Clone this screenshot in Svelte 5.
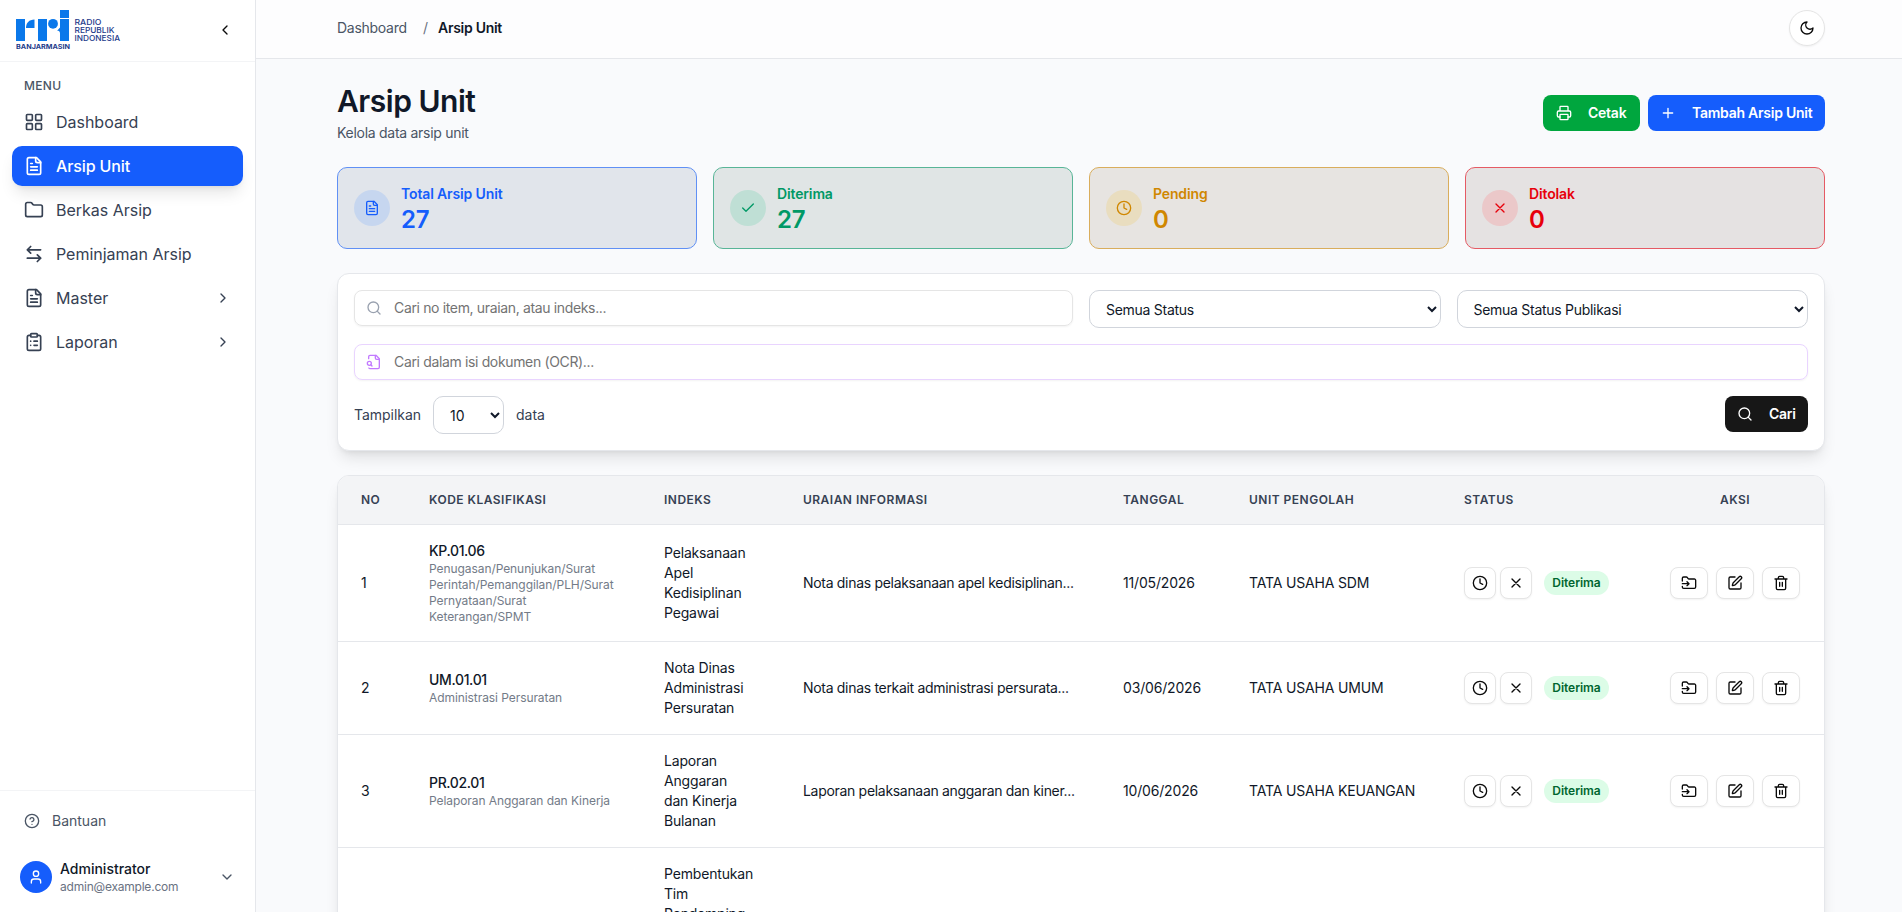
<script lang="ts">
	interface Row {
		no?: number;
		kode?: string;
		klasifikasi?: string;
		indeks: string;
		uraian?: string;
		tanggal?: string;
		unit?: string;
	}

	const icons: Record<string, string> = {
		grid: '<rect width="7" height="7" x="3" y="3" rx="1"/><rect width="7" height="7" x="14" y="3" rx="1"/><rect width="7" height="7" x="14" y="14" rx="1"/><rect width="7" height="7" x="3" y="14" rx="1"/>',
		file: '<path d="M15 2H6a2 2 0 0 0-2 2v16a2 2 0 0 0 2 2h12a2 2 0 0 0 2-2V7Z"/><path d="M14 2v4a2 2 0 0 0 2 2h4M10 9H8M16 13H8M16 17H8"/>',
		folder: '<path d="M20 20a2 2 0 0 0 2-2V8a2 2 0 0 0-2-2h-7.9a2 2 0 0 1-1.69-.9L9.6 3.9A2 2 0 0 0 7.93 3H4a2 2 0 0 0-2 2v13a2 2 0 0 0 2 2Z"/>',
		swap: '<path d="M8 3 4 7l4 4M4 7h16M16 21l4-4-4-4M20 17H4"/>',
		clipboard: '<rect width="8" height="4" x="8" y="2" rx="1"/><path d="M16 4h2a2 2 0 0 1 2 2v14a2 2 0 0 1-2 2H6a2 2 0 0 1-2-2V6a2 2 0 0 1 2-2h2M12 11h4M12 16h4M8 11h.01M8 16h.01"/>',
		left: '<path d="m15 18-6-6 6-6"/>',
		right: '<path d="m9 18 6-6-6-6"/>',
		down: '<path d="m6 9 6 6 6-6"/>',
		help: '<circle cx="12" cy="12" r="10"/><path d="M9.09 9a3 3 0 0 1 5.83 1c0 2-3 3-3 3M12 17h.01"/>',
		user: '<path d="M19 21v-2a4 4 0 0 0-4-4H9a4 4 0 0 0-4 4v2"/><circle cx="12" cy="7" r="4"/>',
		moon: '<path d="M12 3a6 6 0 0 0 9 9 9 9 0 1 1-9-9Z"/>',
		printer: '<path d="M6 18H4a2 2 0 0 1-2-2v-5a2 2 0 0 1 2-2h16a2 2 0 0 1 2 2v5a2 2 0 0 1-2 2h-2M6 9V3a1 1 0 0 1 1-1h10a1 1 0 0 1 1 1v6"/><rect x="6" y="14" width="12" height="8" rx="1"/>',
		plus: '<path d="M5 12h14M12 5v14"/>',
		check: '<path d="M20 6 9 17l-5-5"/>',
		clock: '<circle cx="12" cy="12" r="10"/><path d="M12 6v6l4 2"/>',
		x: '<path d="M18 6 6 18M6 6l12 12"/>',
		search: '<circle cx="11" cy="11" r="8"/><path d="m21 21-4.3-4.3"/>',
		fileSearch: '<path d="M14 2v4a2 2 0 0 0 2 2h4"/><path d="M4.268 21a2 2 0 0 0 1.727 1H18a2 2 0 0 0 2-2V7l-5-5H6a2 2 0 0 0-2 2v3"/><path d="m9 18-1.5-1.5"/><circle cx="5" cy="14" r="3"/>',
		folderInput: '<path d="M2 9V5a2 2 0 0 1 2-2h3.9a2 2 0 0 1 1.69.9l.81 1.2a2 2 0 0 0 1.67.9H20a2 2 0 0 1 2 2v10a2 2 0 0 1-2 2H4a2 2 0 0 1-2-2v-1M2 13h10M9 16l3-3-3-3"/>',
		pen: '<path d="M12 3H5a2 2 0 0 0-2 2v14a2 2 0 0 0 2 2h14a2 2 0 0 0 2-2v-7"/><path d="M18.375 2.625a1 1 0 0 1 3 3l-9.013 9.014a2 2 0 0 1-.853.505l-2.873.84a.5.5 0 0 1-.62-.62l.84-2.873a2 2 0 0 1 .506-.852z"/>',
		trash: '<path d="M3 6h18M19 6v14c0 1-1 2-2 2H7c-1 0-2-1-2-2V6M8 6V4c0-1 1-2 2-2h4c1 0 2 1 2 2v2M10 11v6M14 11v6"/>'
	};

	const menu = [
		{ label: 'Dashboard', icon: 'grid' },
		{ label: 'Arsip Unit', icon: 'file', active: true },
		{ label: 'Berkas Arsip', icon: 'folder' },
		{ label: 'Peminjaman Arsip', icon: 'swap' },
		{ label: 'Master', icon: 'file', children: true },
		{ label: 'Laporan', icon: 'clipboard', children: true }
	];

	const stats = [
		{ label: 'Total Arsip Unit', value: 27, icon: 'file', tone: 'blue' },
		{ label: 'Diterima', value: 27, icon: 'check', tone: 'green' },
		{ label: 'Pending', value: 0, icon: 'clock', tone: 'amber' },
		{ label: 'Ditolak', value: 0, icon: 'x', tone: 'red' }
	];

	const rows: Row[] = [
		{
			no: 1,
			kode: 'KP.01.06',
			klasifikasi: 'Penugasan/Penunjukan/Surat Perintah/Pemanggilan/PLH/Surat Pernyataan/Surat Keterangan/SPMT',
			indeks: 'Pelaksanaan\nApel\nKedisiplinan\nPegawai',
			uraian: 'Nota dinas pelaksanaan apel kedisiplinan...',
			tanggal: '11/05/2026',
			unit: 'TATA USAHA SDM'
		},
		{
			no: 2,
			kode: 'UM.01.01',
			klasifikasi: 'Administrasi Persuratan',
			indeks: 'Nota Dinas\nAdministrasi\nPersuratan',
			uraian: 'Nota dinas terkait administrasi persurata...',
			tanggal: '03/06/2026',
			unit: 'TATA USAHA UMUM'
		},
		{
			no: 3,
			kode: 'PR.02.01',
			klasifikasi: 'Pelaporan Anggaran dan Kinerja',
			indeks: 'Laporan\nAnggaran\ndan Kinerja\nBulanan',
			uraian: 'Laporan pelaksanaan anggaran dan kiner...',
			tanggal: '10/06/2026',
			unit: 'TATA USAHA KEUANGAN'
		},
		{ indeks: 'Pembentukan\nTim\nPendamping' }
	];
</script>

{#snippet icon(name: string, size = 16)}
	<svg
		class="icon"
		width={size}
		height={size}
		viewBox="0 0 24 24"
		fill="none"
		stroke="currentColor"
		stroke-width="2"
		stroke-linecap="round"
		stroke-linejoin="round">{@html icons[name]}</svg>
{/snippet}

<div class="app">
	<aside>
		<div class="brand">
			<svg class="logo" width="106" height="42" viewBox="0 0 106 42">
				<g fill="#0a78ea">
					<path d="M0 10h9v22H0z" />
					<path d="M10 19C10 14 13 10.500 18.500 10.500V19z" />
					<path d="M22 10h9v22h-9z" />
					<circle cx="37" cy="14.8" r="4.9" />
					<path d="M44 1h9v8h-9z" />
					<path d="M44 18.500q-2 2.500-3 3q3 0 3 3V32h9V10h-9z" />
				</g>
				<g fill="#1c3a8a">
					<text class="city" x="0" y="40" textLength="54" lengthAdjust="spacingAndGlyphs">BANJARMASIN</text>
					<text x="58.500" y="16.300" textLength="27" lengthAdjust="spacingAndGlyphs">RADIO</text>
					<text x="58.500" y="24.200" textLength="40" lengthAdjust="spacingAndGlyphs">REPUBLIK</text>
					<text x="58.500" y="32.100" textLength="45.500" lengthAdjust="spacingAndGlyphs">INDONESIA</text>
				</g>
			</svg>
			<button class="collapse" aria-label="Tutup menu">{@render icon('left')}</button>
		</div>

		<nav>
			<div class="menu-title">MENU</div>
			{#each menu as item}
				<a href="#top" class="item" class:active={item.active}>
					{@render icon(item.icon, 20)}
					<span>{item.label}</span>
					{#if item.children}<i>{@render icon('right')}</i>{/if}
				</a>
			{/each}
		</nav>

		<div class="foot">
			<a href="#help" class="help">{@render icon('help')}<span>Bantuan</span></a>
			<div class="account">
				<div class="avatar">{@render icon('user')}</div>
				<div class="who">
					<div class="name">Administrator</div>
					<div class="email">admin@example.com</div>
				</div>
				{@render icon('down')}
			</div>
		</div>
	</aside>

	<main>
		<header>
			<div class="crumbs">
				<span class="crumb">Dashboard</span>
				<span class="sep">/</span>
				<span class="current">Arsip Unit</span>
			</div>
			<button class="theme" aria-label="Tema">{@render icon('moon')}</button>
		</header>

		<div class="page">
			<div class="heading">
				<div>
					<h1>Arsip Unit</h1>
					<p>Kelola data arsip unit</p>
				</div>
				<div class="buttons">
					<button class="btn print">{@render icon('printer')}<span>Cetak</span></button>
					<button class="btn add">{@render icon('plus')}<span>Tambah Arsip Unit</span></button>
				</div>
			</div>

			<div class="stats">
				{#each stats as stat}
					<div class="stat {stat.tone}">
						<div class="bubble">{@render icon(stat.icon)}</div>
						<div>
							<div class="stat-label">{stat.label}</div>
							<div class="stat-value">{stat.value}</div>
						</div>
					</div>
				{/each}
			</div>

			<div class="filters">
				<div class="field wide">
					{@render icon('search')}
					<input placeholder="Cari no item, uraian, atau indeks..." />
				</div>
				<select><option>Semua Status</option></select>
				<select><option>Semua Status Publikasi</option></select>
				<div class="field full ocr">
					{@render icon('fileSearch')}
					<input placeholder="Cari dalam isi dokumen (OCR)..." />
				</div>
				<div class="full bottom">
					<div class="show">
						<span class="tampilkan">Tampilkan</span>
						<select><option>10</option></select>
						<span>data</span>
					</div>
					<button class="btn search">{@render icon('search')}<span>Cari</span></button>
				</div>
			</div>

			<div class="table-card">
				<table>
					<colgroup>
						<col style="width: 67px" />
						<col style="width: 235px" />
						<col style="width: 139px" />
						<col style="width: 320px" />
						<col style="width: 126px" />
						<col style="width: 215px" />
						<col style="width: 206px" />
						<col style="width: 178px" />
					</colgroup>
					<thead>
						<tr>
							<th>NO</th>
							<th>KODE KLASIFIKASI</th>
							<th>INDEKS</th>
							<th>URAIAN INFORMASI</th>
							<th>TANGGAL</th>
							<th>UNIT PENGOLAH</th>
							<th>STATUS</th>
							<th class="center">AKSI</th>
						</tr>
					</thead>
					<tbody>
						{#each rows as row}
							<tr>
								<td>{row.no ?? ''}</td>
								<td>
									{#if row.kode}
										<div class="kode">{row.kode}</div>
										<div class="klasifikasi">{row.klasifikasi}</div>
									{/if}
								</td>
								<td class="indeks">{row.indeks}</td>
								<td class="uraian">{row.uraian ?? ''}</td>
								<td class="tanggal">{row.tanggal ?? ''}</td>
								<td class="unit">{row.unit ?? ''}</td>
								<td>
									{#if row.no}
										<div class="status">
											<button class="sq" aria-label="Pending">{@render icon('clock')}</button>
											<button class="sq" aria-label="Tolak">{@render icon('x')}</button>
											<span class="badge">Diterima</span>
										</div>
									{/if}
								</td>
								<td>
									{#if row.no}
										<div class="actions">
											<button class="sq" aria-label="Berkaskan">{@render icon('folderInput')}</button>
											<button class="sq" aria-label="Ubah">{@render icon('pen')}</button>
											<button class="sq" aria-label="Hapus">{@render icon('trash')}</button>
										</div>
									{/if}
								</td>
							</tr>
						{/each}
					</tbody>
				</table>
			</div>
		</div>
	</main>
</div>

<style>
	:global(body) {
		margin: 0;
		overflow: hidden;
	}

	.app {
		display: flex;
		height: 912px;
		overflow: hidden;
		background: #f9fafc;
		color: #101828;
		font-family: Inter, 'Liberation Sans', sans-serif;
		font-size: 14px;
		line-height: 20px;
		letter-spacing: -0.02em;
	}

	.app :global(*) { box-sizing: border-box; }

	button, input, select {
		font: inherit;
		letter-spacing: inherit;
		color: inherit;
		margin: 0;
	}

	a { color: inherit; text-decoration: none; }

	.icon { flex-shrink: 0; display: block; }

	/* sidebar */
	aside {
		width: 256px;
		flex-shrink: 0;
		display: flex;
		flex-direction: column;
		background: #fff;
		border-right: 1px solid #e5e7eb;
	}

	.brand {
		height: 62px;
		display: flex;
		align-items: flex-start;
		justify-content: space-between;
		padding: 9px 22px 0 16px;
		border-bottom: 1px solid #f3f4f6;
	}

	.logo text { font-size: 8px; letter-spacing: 0; font-weight: 500; }
	.logo .city { font-size: 6.5px; font-weight: 700; }

	.collapse {
		margin-top: 13px;
		padding: 0;
		border: 0;
		background: none;
		color: #0a0a0a;
	}

	nav { flex: 1; padding: 14px 12px 0; }

	.menu-title {
		padding: 0 12px;
		margin-bottom: 6px;
		font-size: 12px;
		font-weight: 500;
		letter-spacing: 0.025em;
		color: #4a5565;
	}

	.item {
		height: 40px;
		margin-bottom: 4px;
		padding: 0 12px;
		display: flex;
		align-items: center;
		gap: 12px;
		border-radius: 10px;
		font-size: 16px;
		letter-spacing: -0.001em;
		color: #364153;
	}

	.item i { margin-left: auto; }

	.item.active {
		background: #155dfc;
		color: #fff;
		font-weight: 500;
		letter-spacing: -0.008em;
		box-shadow: 0 10px 15px -3px rgba(0, 0, 0, 0.1), 0 4px 6px -4px rgba(0, 0, 0, 0.1);
	}

	.foot {
		height: 122px;
		border-top: 1px solid #f3f4f6;
		padding: 12px 20px 0;
	}

	.help {
		display: flex;
		align-items: center;
		gap: 12px;
		height: 36px;
		padding-left: 4px;
		letter-spacing: 0;
		color: #4a5565;
	}

	.account {
		display: flex;
		align-items: center;
		gap: 8px;
		margin-top: 18px;
		height: 40px;
		color: #4a5565;
	}

	.avatar {
		width: 32px;
		height: 32px;
		border-radius: 50%;
		background: #155dfc;
		color: #fff;
		display: grid;
		place-items: center;
	}

	.who { flex: 1; }
	.name { font-weight: 500; color: #101828; line-height: 18px; letter-spacing: 0; }
	.email { font-size: 12px; line-height: 17px; color: #6a7282; letter-spacing: -0.018em; }

	/* main */
	main { flex: 1; min-width: 0; }

	header {
		height: 59px;
		display: flex;
		align-items: center;
		justify-content: space-between;
		padding: 0 77px 3px 81px;
		background: #fdfdfe;
		border-bottom: 1px solid #e5e7eb;
	}

	.crumbs { display: flex; }
	.crumb { width: 86px; color: #4a5565; }
	.sep { width: 15px; color: #6a7282; }
	.current { font-weight: 600; letter-spacing: -0.02em; }

	.theme {
		width: 36px;
		height: 36px;
		padding: 0;
		display: grid;
		place-items: center;
		border: 1px solid #e5e5e5;
		border-radius: 50%;
		background: #fff;
		color: #0a0a0a;
		box-shadow: 0 1px 2px rgba(0, 0, 0, 0.05);
	}

	.page { padding: 24px 77px 0 81px; }

	.heading {
		display: flex;
		justify-content: space-between;
		height: 84px;
	}

	h1 {
		margin: 0;
		font-size: 30px;
		line-height: 36px;
		font-weight: 600;
		letter-spacing: -0.016em;
	}

	p { margin: 4px 0 0; color: #4a5565; }

	.buttons { display: flex; gap: 8px; padding-top: 12px; }

	.btn {
		height: 36px;
		display: flex;
		align-items: center;
		gap: 16px;
		padding: 0 12px;
		border: 0;
		border-radius: 8px;
		color: #fff;
		font-weight: 600;
		letter-spacing: -0.018em;
		white-space: nowrap;
	}

	.print { width: 97px; padding-left: 13px; background: #00a63e; }
	.add { width: 177px; background: #155dfc; }
	.search { width: 83px; background: #171717; }

	.stats {
		display: grid;
		grid-template-columns: repeat(4, 1fr);
		gap: 16px;
	}

	.stat {
		height: 82px;
		display: flex;
		align-items: center;
		gap: 11px;
		padding: 0 16px;
		border: 1px solid;
		border-radius: 10px;
	}

	.bubble {
		width: 36px;
		height: 36px;
		border-radius: 50%;
		display: grid;
		place-items: center;
	}

	.stat-label { font-weight: 600; letter-spacing: -0.01em; }
	.stat-value { margin-top: 4px; font-size: 24px; line-height: 24px; font-weight: 600; }

	.blue { background: #e1e5eb; border-color: #6090f5; color: #155dfc; }
	.blue .bubble { background: #c6d6ef; }
	.green { background: #e0e5e5; border-color: #58b597; color: #009966; }
	.green .bubble { background: #bfdfd5; }
	.amber { background: #e7e4e1; border-color: #d9ad5c; color: #d08700; }
	.amber .bubble { background: #e9ddbf; }
	.red { background: #e5e2e2; border-color: #e55a64; color: #e7000b; }
	.red .bubble { background: #ebc8c9; }

	.filters {
		display: grid;
		grid-template-columns: repeat(4, 1fr);
		align-items: start;
		gap: 16px;
		margin-top: 24px;
		padding: 16px;
		background: #fff;
		border: 1px solid #e5e7eb;
		border-radius: 12px;
		box-shadow: 0 10px 15px -3px rgba(0, 0, 0, 0.1), 0 4px 6px -4px rgba(0, 0, 0, 0.1);
	}

	.wide { grid-column: span 2; }
	.full { grid-column: 1 / -1; }

	.field {
		height: 36px;
		display: flex;
		align-items: center;
		gap: 12px;
		padding: 0 11px;
		border: 1px solid #e5e5e5;
		border-radius: 8px;
		box-shadow: 0 1px 2px rgba(0, 0, 0, 0.05);
		color: #99a1af;
	}

	.ocr { border-color: #e9d4ff; color: #c27aff; }

	input {
		flex: 1;
		padding: 0;
		border: 0;
		outline: 0;
		background: none;
		letter-spacing: -0.025em;
	}

	input::placeholder { color: #737373; }

	select {
		height: 38px;
		padding: 8px 12px;
		border: 1px solid #d1d5dc;
		border-radius: 10px;
		background: #fff;
		color: #101828;
	}

	.bottom { display: flex; justify-content: space-between; }

	.show {
		display: flex;
		align-items: center;
		letter-spacing: -0.002em;
		color: #364153;
	}

	.tampilkan { width: 79px; }
	.show select { width: 71px; margin-right: 12px; }

	.table-card {
		margin-top: 24px;
		background: #fff;
		border: 1px solid #e5e7eb;
		border-radius: 12px;
		overflow: hidden;
		box-shadow: 0 10px 15px -3px rgba(0, 0, 0, 0.1), 0 4px 6px -4px rgba(0, 0, 0, 0.1);
	}

	table {
		width: 100%;
		table-layout: fixed;
		border-spacing: 0;
	}

	th {
		padding: 16px 24px;
		text-align: left;
		font-size: 12px;
		line-height: 16px;
		font-weight: 600;
		letter-spacing: 0.04em;
		white-space: nowrap;
		color: #364153;
		background: #f3f4f6;
		border-bottom: 1px solid #e5e7eb;
	}

	th:first-child, td:first-child { padding-left: 23px; }

	.center { text-align: center; }

	td {
		padding: 16px 24px;
		vertical-align: middle;
		border-bottom: 1px solid #e5e7eb;
	}

	.kode { font-weight: 500; letter-spacing: -0.025em; }
	.klasifikasi { font-size: 12px; line-height: 16px; letter-spacing: -0.006em; color: #737b88; }
	.indeks { white-space: pre-line; letter-spacing: -0.012em; }
	.uraian { white-space: nowrap; letter-spacing: -0.022em; }
	.tanggal, .unit { white-space: nowrap; letter-spacing: -0.012em; }

	.status { display: flex; align-items: center; gap: 4px; }
	.actions { display: flex; gap: 8px; }

	.sq {
		width: 32px;
		height: 32px;
		padding: 0;
		flex-shrink: 0;
		display: grid;
		place-items: center;
		border: 1px solid #e5e5e5;
		border-radius: 8px;
		background: #fff;
		color: #0a0a0a;
		box-shadow: 0 1px 2px rgba(0, 0, 0, 0.05);
	}

	.actions .sq { width: 38px; }

	.badge {
		margin-left: 8px;
		width: 65px;
		height: 24px;
		line-height: 24px;
		text-align: center;
		font-size: 12px;
		font-weight: 600;
		letter-spacing: -0.005em;
		border-radius: 12px;
		background: #dcfce7;
		color: #016630;
	}
</style>
